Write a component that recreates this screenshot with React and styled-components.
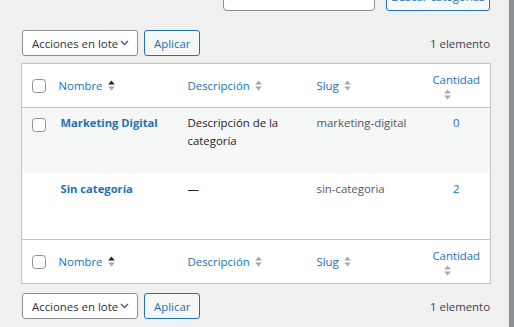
import React from "react";
import styled, { createGlobalStyle } from "styled-components";

const GlobalStyle = createGlobalStyle`
  html, body {
    margin: 0;
    padding: 0;
    background: #f0f0f1;
    overflow: hidden;
  }
  body {
    font-family: "Open Sans", "Noto Sans", sans-serif;
    font-size: 11.4px;
    color: #3c434a;
  }
`;

const Screen = styled.div`
  display: flex;
  width: 514px;
  height: 327px;
  overflow: hidden;
`;

const Content = styled.div`
  flex: 1;
  min-width: 0;
  padding: 0 19px 0 21px;
  display: flex;
  flex-direction: column;
`;

const ScrollStrip = styled.div`
  width: 5px;
  background: #8c8f94;
`;

const SearchBox = styled.div`
  display: flex;
  justify-content: flex-end;
  gap: 11px;
  margin-top: -19px;
`;

const SearchInput = styled.div`
  width: 150px;
  height: 28px;
  background: #fff;
  border: 1px solid #8c8f94;
  border-radius: 4px;
`;

const Button = styled.div`
  display: flex;
  align-items: center;
  justify-content: center;
  box-sizing: border-box;
  height: ${(p) => p.$h || 26}px;
  padding: 0 ${(p) => p.$px || 9}px;
  background: #f6f7f7;
  color: #2271b1;
  border: 1px solid #2271b1;
  border-radius: 3px;
  white-space: nowrap;
`;

const NavBar = styled.div`
  display: flex;
  align-items: center;
  gap: 6px;
  margin: ${(p) => p.$m};
`;

const Select = styled.div`
  display: flex;
  align-items: center;
  justify-content: space-between;
  box-sizing: border-box;
  width: 116px;
  height: 26px;
  padding: 0 8px 0 9px;
  background: #fff;
  color: #2c3338;
  border: 1px solid #8c8f94;
  border-radius: 3px;
  white-space: nowrap;
`;

const Count = styled.div`
  margin-left: auto;
  color: #3c434a;
`;

const Table = styled.table`
  width: 470px;
  box-sizing: border-box;
  border-collapse: collapse;
  table-layout: fixed;
  background: #fff;
  border: 1px solid #c3c4c7;
`;

const HeadRow = styled.tr`
  height: 44px;
  border-${(p) => p.$side}: 1px solid #c3c4c7;
`;

const Th = styled.th`
  box-sizing: border-box;
  width: ${(p) => p.$w}px;
  padding: 0 ${(p) => (p.$check ? 0 : 8)}px 0 ${(p) => (p.$check ? 10 : 8)}px;
  text-align: left;
  font-weight: 400;
  vertical-align: middle;
`;

const SortLink = styled.span`
  display: inline-flex;
  align-items: center;
  gap: 5px;
  color: #2271b1;
`;

const CountHead = styled.div`
  display: flex;
  flex-direction: column;
  align-items: center;
  color: #2271b1;
  padding: 0 0 0 6px;
  line-height: 15px;

  svg {
    align-self: flex-start;
    margin: 2px 0 0 13px;
  }
`;

const Row = styled.tr`
  height: 66px;
  background: ${(p) => (p.$alt ? "#f6f7f7" : "#fff")};
`;

const Td = styled.td`
  vertical-align: top;
  padding: ${(p) => (p.$check ? "10px 0 0 10px" : p.$center ? "6px 2px 0 8px" : "6px 8px 0 8px")};
  text-align: ${(p) => (p.$center ? "center" : "left")};
  color: ${(p) => p.$color || "#50575e"};
  line-height: 18px;
`;

const RowTitle = styled.span`
  display: inline-block;
  padding-left: 2px;
  font-weight: 700;
  font-size: 11.2px;
  color: #2271b1;
`;

const Check = styled.span`
  display: block;
  box-sizing: border-box;
  width: 14px;
  height: 14px;
  background: #fff;
  border: 1px solid #8c8f94;
  border-radius: 3.5px;
`;

const Chevron = () => (
  <svg width="9" height="6" viewBox="0 0 9 6">
    <path d="M1 1 L4.5 4.5 L8 1" fill="none" stroke="#50575e" strokeWidth="1.3" />
  </svg>
);

const SortIcon = ({ active }) => (
  <svg width="7" height="11" viewBox="0 0 7 11">
    <path d="M3.5 0.5 L6.8 4.6 L0.2 4.6 Z" fill={active ? "#1d2327" : "#a7aaad"} />
    <path d="M0.2 6.4 L6.8 6.4 L3.5 10.5 Z" fill="#a7aaad" />
  </svg>
);

const Nav = ({ m }) => (
  <NavBar $m={m}>
    <Select>
      Acciones en lote <Chevron />
    </Select>
    <Button>Aplicar</Button>
    <Count>1 elemento</Count>
  </NavBar>
);

const Header = ({ side }) => (
  <HeadRow $side={side}>
    <Th $w={29} $check>
      <Check />
    </Th>
    <Th $w={129}>
      <SortLink>
        Nombre <SortIcon active />
      </SortLink>
    </Th>
    <Th $w={129}>
      <SortLink>
        Descripción <SortIcon />
      </SortLink>
    </Th>
    <Th $w={108}>
      <SortLink>
        Slug <SortIcon />
      </SortLink>
    </Th>
    <Th $w={74}>
      <CountHead>
        Cantidad
        <SortIcon />
      </CountHead>
    </Th>
  </HeadRow>
);

const categories = [
  { name: "Marketing Digital", desc: "Descripción de la categoría", slug: "marketing-digital", count: 0, check: true },
  { name: "Sin categoría", desc: "—", slug: "sin-categoria", count: 2, check: false },
];

export default function App() {
  return (
    <Screen>
      <GlobalStyle />
      <Content>
        <SearchBox>
          <SearchInput />
          <Button $h={30} $px={4}>Buscar categorías</Button>
        </SearchBox>
        <Nav m="19px 0 7px 1px" />
        <Table>
          <thead>
            <Header side="bottom" />
          </thead>
          <tbody>
            {categories.map((c, i) => (
              <Row key={c.slug} $alt={i % 2 === 0}>
                <Td $check>{c.check && <Check />}</Td>
                <Td>
                  <RowTitle>{c.name}</RowTitle>
                </Td>
                <Td $color="#1d2327">{c.desc}</Td>
                <Td>{c.slug}</Td>
                <Td $center $color="#2271b1">
                  {c.count}
                </Td>
              </Row>
            ))}
          </tbody>
          <tfoot>
            <Header side="top" />
          </tfoot>
        </Table>
        <Nav m="9px 0 0 1px" />
      </Content>
      <ScrollStrip />
    </Screen>
  );
}
